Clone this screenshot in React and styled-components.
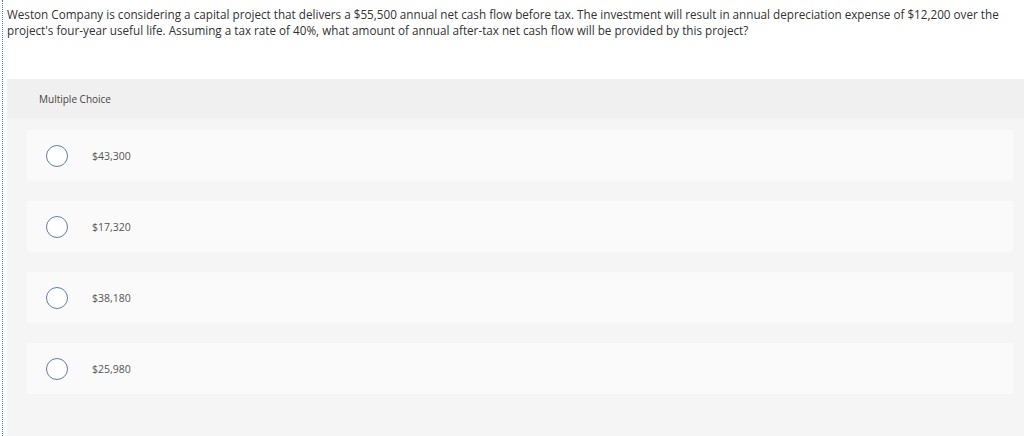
import React from "react";
import styled, { createGlobalStyle } from "styled-components";

const GlobalStyle = createGlobalStyle`
  html, body {
    margin: 0;
    padding: 0;
    background: #ffffff;
  }
  body {
    font-family: "Open Sans", "Liberation Sans", Arial, sans-serif;
  }
`;

const Page = styled.div`
  margin-left: 2px;
  border-left: 1px dotted #3f7fd6;
  min-height: 436px;
  padding-left: 4px;
  box-sizing: border-box;
`;

const Question = styled.p`
  margin: 0;
  padding: 6px 8px 0 0;
  font-size: 11.7px;
  line-height: 16px;
  color: #333333;
  height: 79px;
  box-sizing: border-box;
`;

const Panel = styled.section`
  display: flex;
  flex-direction: column;
  background: #f5f5f5;
  min-height: 357px;
`;

const PanelHeader = styled.div`
  height: 39px;
  background: #f0f0f0;
  display: flex;
  align-items: center;
  padding-left: 32px;
  font-size: 10px;
  color: #444444;
`;

const Choices = styled.div`
  display: flex;
  flex-direction: column;
  gap: 20px;
  padding: 12px 11px 20px 20px;
`;

const Choice = styled.label`
  display: flex;
  align-items: center;
  height: 51px;
  padding-left: 19px;
  background: #fafafa;
  border-radius: 2px;
  cursor: pointer;
`;

const Radio = styled.span`
  width: 22px;
  height: 22px;
  box-sizing: border-box;
  border-radius: 50%;
  border: 1.5px solid #5b81ac;
  background: #ffffff;
  flex-shrink: 0;
`;

const ChoiceText = styled.span`
  margin-left: 24px;
  font-size: 10.5px;
  color: #555555;
`;

const options = ["$43,300", "$17,320", "$38,180", "$25,980"];

const App = () => {
  return (
    <>
      <GlobalStyle />
      <Page>
        <Question>
          Weston Company is considering a capital project that delivers a $55,500 annual net cash flow before tax. The investment will result in annual depreciation expense of $12,200 over the project's four-year useful life. Assuming a tax rate of 40%, what amount of annual after-tax net cash flow will be provided by this project?
        </Question>
        <Panel>
          <PanelHeader>Multiple Choice</PanelHeader>
          <Choices>
            {options.map((o) => (
              <Choice key={o}>
                <Radio />
                <ChoiceText>{o}</ChoiceText>
              </Choice>
            ))}
          </Choices>
        </Panel>
      </Page>
    </>
  );
};

export default App;
